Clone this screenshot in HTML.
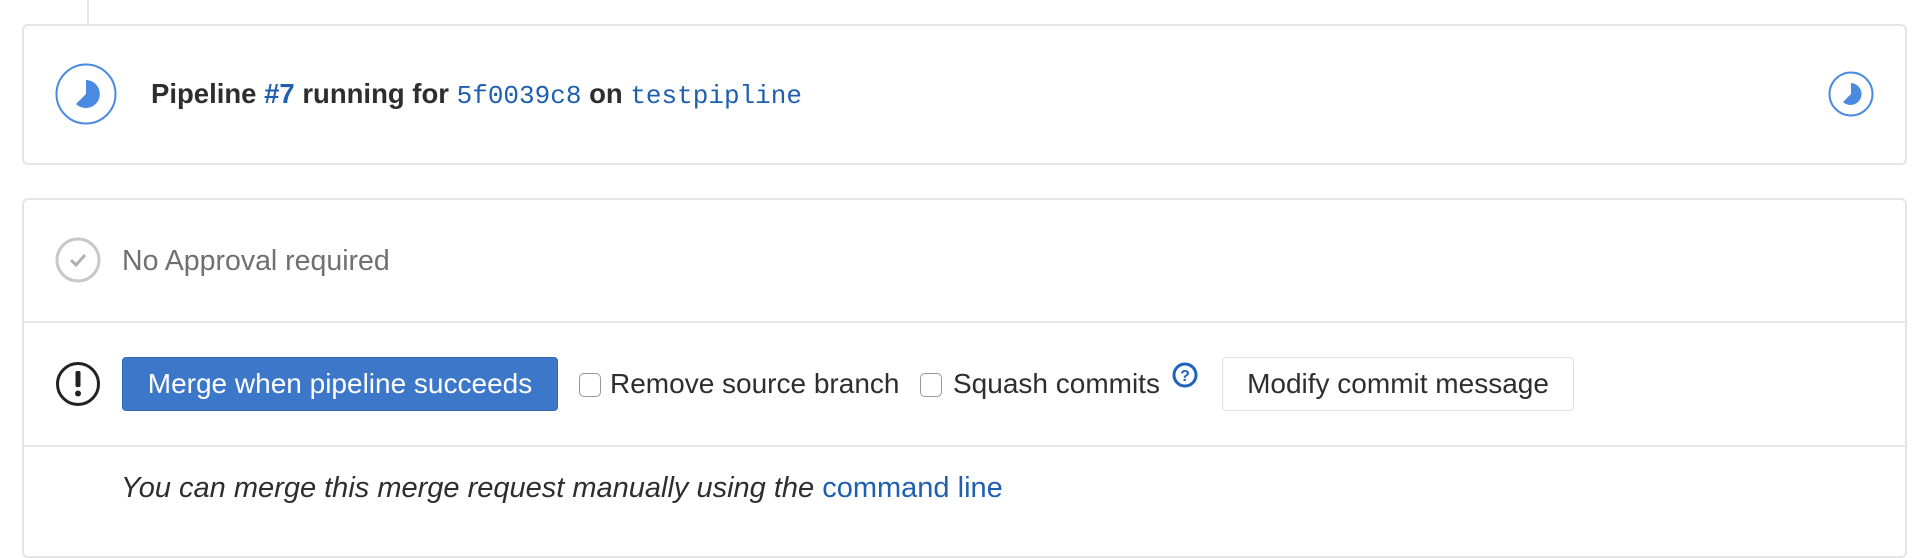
<!DOCTYPE html>
<html><head><meta charset="utf-8"><style>
*{box-sizing:border-box;margin:0;padding:0}
body{width:1920px;height:528px;background:#fff;font-family:"Liberation Sans",Helvetica,Arial,sans-serif;position:relative;overflow:hidden;color:#2e2e2e}
.abs{position:absolute}
.card{position:absolute;left:22px;right:13px;border:2px solid #e5e5e5;border-radius:6px;background:#fff}
.t{position:absolute;font-size:28px;white-space:nowrap;line-height:32px}
.mono{font-family:"Liberation Mono",monospace;color:#1f5fb0;font-weight:normal;font-size:26px}
a{color:#1f5fb0;text-decoration:none}
.cb{position:absolute;width:22px;height:24px;border:1.5px solid #999;border-radius:5px;background:#fff}
</style></head><body>
<div class="abs" style="left:87px;top:0;width:2px;height:24px;background:#e5e5e5"></div>
<div class="card" style="top:24px;height:141px"></div>
<svg class="abs" style="left:55px;top:63px" width="62" height="62" viewBox="0 0 62 62"><circle cx="31" cy="31" r="29.5" fill="none" stroke="#4a8ae0" stroke-width="2"/><path d="M31 17 A14 14 0 1 1 21 41 L31 31 Z" fill="#4a8ae0"/></svg>
<div class="t" style="left:151px;top:78px;font-weight:bold;color:#2e2e2e;font-size:27.5px">Pipeline <a>#7</a> running for <span class="mono">5f0039c8</span> on <span class="mono">testpipline</span></div>
<svg class="abs" style="left:1828px;top:71px" width="46" height="46" viewBox="0 0 46 46"><circle cx="23" cy="23" r="21.5" fill="none" stroke="#4a8ae0" stroke-width="2"/><path d="M23 12 A11 11 0 1 1 15 31 L23 23 Z" fill="#4a8ae0"/></svg>
<div class="card" style="top:198px;height:360px"></div>
<svg class="abs" style="left:55px;top:237px" width="46" height="46" viewBox="0 0 46 46"><circle cx="23" cy="23" r="21" fill="none" stroke="#c8c8c8" stroke-width="3"/><path d="M16 23 L21 28 L30 18" fill="none" stroke="#b0b0b0" stroke-width="3"/></svg>
<div class="t" style="left:122px;top:245px;color:#707070;font-size:28.5px">No Approval required</div>
<div class="abs" style="left:22px;right:13px;top:321px;height:2px;background:#e5e5e5"></div>
<svg class="abs" style="left:55px;top:361px" width="46" height="46" viewBox="0 0 46 46"><circle cx="23" cy="23" r="20.5" fill="none" stroke="#222" stroke-width="3"/><rect x="20.5" y="10" width="5" height="16" rx="1.5" fill="#222"/><circle cx="23" cy="32.5" r="3" fill="#222"/></svg>
<div class="abs" style="left:122px;top:357px;width:436px;height:54px;background:#3c77c9;border:1px solid #2f68b8;border-radius:4px;color:#fff;font-size:28px;line-height:52px;text-align:center;white-space:nowrap">Merge when pipeline succeeds</div>
<div class="cb" style="left:579px;top:373px"></div>
<div class="t" style="left:610px;top:368px">Remove source branch</div>
<div class="cb" style="left:920px;top:373px"></div>
<div class="t" style="left:953px;top:368px">Squash commits</div>
<svg class="abs" style="left:1172px;top:362px" width="26" height="26" viewBox="0 0 26 26"><circle cx="13" cy="13" r="11" fill="none" stroke="#1f62c0" stroke-width="3"/><text x="13" y="19" font-family="Liberation Sans" font-size="16" font-weight="bold" fill="#1f62c0" text-anchor="middle">?</text></svg>
<div class="abs" style="left:1222px;top:357px;width:352px;height:54px;background:#fff;border:1.5px solid #e0e0e0;border-radius:4px;font-size:28px;line-height:51px;text-align:center;color:#2e2e2e;white-space:nowrap">Modify commit message</div>
<div class="abs" style="left:22px;right:13px;top:445px;height:2px;background:#e5e5e5"></div>
<div class="t" style="left:121px;top:472px;font-style:italic;color:#2e2e2e;font-size:29px">You can merge this merge request manually using the <a style="font-style:normal">command line</a></div>
</body></html>
